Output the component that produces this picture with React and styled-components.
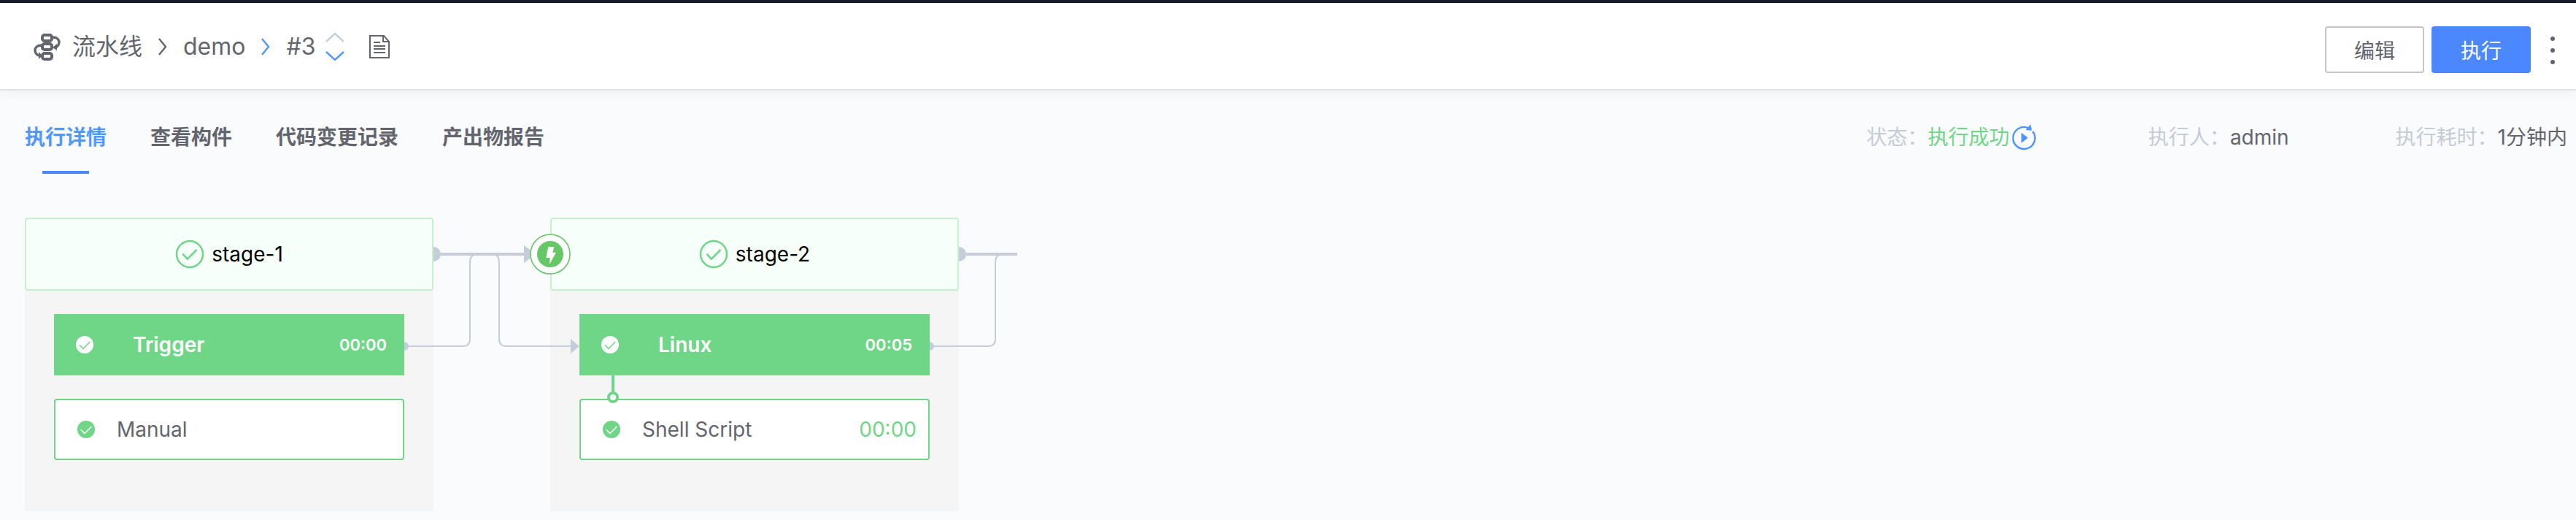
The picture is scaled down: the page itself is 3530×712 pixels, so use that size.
import React from "react";
import styled, { createGlobalStyle } from "styled-components";

const Global = createGlobalStyle`
  *, *::before, *::after { box-sizing: border-box; }
  body { margin: 0; background: #fafbfd; }
  body, button { font-family: Inter, "Noto Sans CJK SC", sans-serif; }
  svg { display: block; flex: none; }
`;

const Page = styled.div`
  min-height: 100vh;
  color: #63656e;
  font-size: 28px;
  line-height: 40px;
`;

const Header = styled.header`
  display: flex;
  justify-content: space-between;
  align-items: flex-start;
  padding: 32px 12px 22px 46px;
  background: #fff;
  border-top: 4px solid #181826;
  border-bottom: 2px solid #dde4eb;
  box-shadow: 0 4px 16px rgba(0, 0, 0, 0.04);
`;

const Breadcrumb = styled.nav`
  display: flex;
  align-items: center;
  height: 56px;
  font-size: 32px;
`;

const Crumb = styled.a`
  color: inherit;
  text-decoration: none;
`;

const BreadcrumbIcon = styled.svg`
  margin-right: 16px;
`;

const Separator = styled.svg`
  margin: 0 22px;
`;

const IconButton = styled.button`
  display: flex;
  flex-direction: column;
  gap: 12px;
  padding: 0;
  border: 0;
  background: none;
  color: inherit;
  margin-left: ${(p) => p.$gap}px;
`;

const Actions = styled.div`
  display: flex;
  align-items: center;
  gap: 10px;
`;

const Button = styled.button`
  width: 136px;
  height: 64px;
  padding: 0;
  border: 2px solid ${(p) => (p.$primary ? "#4b87ff" : "#c4c6cc")};
  border-radius: 4px;
  background: ${(p) => (p.$primary ? "#4b87ff" : "#fff")};
  color: ${(p) => (p.$primary ? "#fff" : "#63656e")};
  font-size: 28px;
`;

const SubBar = styled.div`
  display: flex;
  justify-content: space-between;
  align-items: flex-start;
  padding: 40px 12px 0 34px;
  line-height: 48px;
`;

const Tabs = styled.nav`
  display: flex;
  gap: 60px;
`;

const Tab = styled.a`
  color: ${(p) => (p.$active ? "#5098ff" : "#63656e")};
  font-weight: 700;
  text-decoration: none;
  &::after {
    content: "";
    display: block;
    width: 64px;
    height: 4px;
    margin: 22px auto 0;
    background: ${(p) => (p.$active ? "#4b87ff" : "transparent")};
  }
`;

const Summary = styled.dl`
  display: flex;
  gap: 146px;
  margin: 0;
`;

const Fact = styled.div`
  display: flex;
  align-items: center;
`;

const FactLabel = styled.dt`
  color: #c5ccd6;
`;

const FactValue = styled.dd`
  display: flex;
  align-items: center;
  margin: 0;
  color: ${(p) => (p.$success ? "#6fd687" : "#63656e")};
`;

const RetryButton = styled.button`
  margin: 0 8px 0 2px;
  padding: 0;
  border: 0;
  background: none;
`;

const Pipeline = styled.main`
  display: flex;
  align-items: flex-start;
  padding: 60px 34px 12px;
`;

const Stage = styled.section`
  position: relative;
  flex: none;
  width: 560px;
  border-radius: 4px;
  background: #f5f5f5;
`;

const StageHeader = styled.header`
  display: flex;
  align-items: center;
  justify-content: center;
  gap: 10px;
  height: 100px;
  border: 2px solid #c6f0cf;
  border-radius: 4px;
  background: #f6fff9;
`;

const StageTitle = styled.h2`
  margin: 0;
  color: #000;
  font-size: 28px;
  font-weight: 400;
`;

const Gate = styled.span`
  position: absolute;
  top: 22px;
  left: -28px;
  z-index: 2;
`;

const Jobs = styled.div`
  display: flex;
  flex-direction: column;
  gap: 32px;
  padding: 32px 40px 70px;
`;

const JobRow = styled.div`
  display: flex;
  align-items: center;
  gap: 54px;
  height: 84px;
  padding: 0 24px 0 30px;
  background: #6fd687;
  color: #fff;
  font-weight: 600;
`;

const AtomRow = styled.div`
  position: relative;
  display: flex;
  align-items: center;
  gap: 30px;
  height: 84px;
  padding: 0 16px 0 30px;
  border: 2px solid #6fd687;
  border-radius: 4px;
  background: #fff;
`;

const Name = styled.span`
  flex: 1;
`;

const JobTime = styled.time`
  font-size: 22px;
`;

const AtomTime = styled.time`
  color: #6fd687;
`;

const AtomLinkSvg = styled.svg`
  position: absolute;
  left: 36px;
  top: -34px;
`;

const Connector = styled.svg`
  width: ${(p) => p.$width}px;
  height: 200px;
  overflow: visible;
  z-index: 1;
`;

const PipelineIcon = () => (
  <BreadcrumbIcon width="37" height="38" viewBox="0 0 37 38" fill="none" stroke="#63656e" strokeWidth="4">
    <rect x="12" y="3" width="13" height="8" rx="3" />
    <rect x="12" y="15" width="13" height="8" rx="3" />
    <rect x="12" y="28" width="13" height="8" rx="3" />
    <path d="M26 6c6 0 9 3 9 7s-3 7-7 7M11 17c-6 0-9 3-9 7s3 7 7 7" strokeWidth="3.4" />
    <path d="M32 15v9l-6-4zM7 26v10l5-5z" fill="#63656e" stroke="none" />
  </BreadcrumbIcon>
);

const Chevron = ({ color }) => (
  <Separator width="12" height="24" viewBox="0 0 12 24" fill="none" stroke={color} strokeWidth="2.4">
    <path d="M1 1l9 11L1 23" />
  </Separator>
);

const Caret = ({ up, color }) => (
  <svg width="26" height="13" viewBox="0 0 26 13" fill="none" stroke={color} strokeWidth="2.4">
    <path d={up ? "M1 12L13 1l12 11" : "M1 1l12 11L25 1"} />
  </svg>
);

const DocIcon = () => (
  <svg width="28" height="32" viewBox="0 0 28 32" fill="none" stroke="#63656e" strokeWidth="2">
    <path d="M1 1h19l7 8v22H1z" />
    <path d="M19 1v8h8M6 10h9M6 15h16M6 19h16M6 24h16" />
  </svg>
);

const MoreIcon = () => (
  <svg width="40" height="40" viewBox="0 0 40 40" fill="#63656e">
    <circle cx="20" cy="5" r="3" />
    <circle cx="20" cy="21" r="3" />
    <circle cx="20" cy="37" r="3" />
  </svg>
);

const RetryIcon = () => (
  <svg width="34" height="36" viewBox="0 0 34 36" fill="none" stroke="#4b94ff" strokeWidth="2.4">
    <path d="M29.6 10A15 15 0 1 1 24 5.4" />
    <path d="M26.3 1.3L27.6 8.2l-7-.6z" fill="#4b94ff" stroke="#4b94ff" strokeWidth="1" />
    <path d="M14 11.7l9 7-9 7z" fill="#4b94ff" stroke="none" />
  </svg>
);

const StageCheck = () => (
  <svg width="40" height="40" viewBox="0 0 40 40" fill="none" stroke="#6fd687" strokeWidth="2.5">
    <circle cx="20" cy="20" r="18" />
    <path d="M10.5 19.7l6.3 7L29.5 14" />
  </svg>
);

const CheckDot = ({ fill, mark }) => (
  <svg width="24" height="24" viewBox="0 0 24 24">
    <circle cx="12" cy="12" r="12" fill={fill} />
    <path d="M4.7 12.2l5.3 5.2 9.3-9.5" fill="none" stroke={mark} strokeWidth="1.5" />
  </svg>
);

const GateIcon = () => (
  <svg width="56" height="56" viewBox="0 0 56 56">
    <circle cx="28" cy="28" r="27" fill="#fff" stroke="#65c765" strokeWidth="1.6" />
    <circle cx="28" cy="28" r="18" fill="#65c765" />
    <path d="M25.3 18h8l-2 7.7H36L27 42l.7-9h-5.4z" fill="#fff" />
  </svg>
);

const AtomLink = () => (
  <AtomLinkSvg width="16" height="38" viewBox="0 0 16 38" stroke="#6fd687" strokeWidth="4">
    <path d="M8 0v24" />
    <circle cx="8" cy="30" r="6" fill="#fff" />
  </AtomLinkSvg>
);

const wireColor = "#c4cdd9";

const Wires = ({ last }) => (
  <Connector $width={last ? 80 : 160} fill="none" stroke={wireColor} strokeWidth="2">
    <path d={last ? "M0 50H80" : "M0 50H126"} strokeWidth="4" />
    <path d="M0 40a10 10 0 0 1 0 20zM-40 170a6 6 0 0 1 0 12z" fill={wireColor} stroke="none" />
    <path d="M-40 176H40q10 0 10-10V62q0-10 6-11" />
    {!last && (
      <>
        <path d="M84 51q6 1 6 11v104q0 10 10 10h90" />
        <path d="M124 38l16 12-16 12zM188 166l12 10-12 10z" fill={wireColor} stroke="none" />
      </>
    )}
  </Connector>
);

const stages = [
  { title: "stage-1", job: "Trigger", time: "00:00", atom: "Manual" },
  { title: "stage-2", job: "Linux", time: "00:05", atom: "Shell Script", atomTime: "00:00", gate: true, linked: true },
];

const tabs = ["执行详情", "查看构件", "代码变更记录", "产出物报告"];

export default function App() {
  return (
    <Page>
      <Global />
      <Header>
        <Breadcrumb>
          <PipelineIcon />
          <Crumb href="#pipelines">流水线</Crumb>
          <Chevron color="#63656e" />
          <Crumb href="#demo">demo</Crumb>
          <Chevron color="#5098ff" />
          <span>#3</span>
          <IconButton type="button" $gap={13} aria-label="切换构建">
            <Caret up color="#c4cdd9" />
            <Caret color="#5098ff" />
          </IconButton>
          <IconButton type="button" $gap={34} aria-label="查看日志">
            <DocIcon />
          </IconButton>
        </Breadcrumb>
        <Actions>
          <Button type="button">编辑</Button>
          <Button type="button" $primary>执行</Button>
          <IconButton type="button" $gap={0} aria-label="更多">
            <MoreIcon />
          </IconButton>
        </Actions>
      </Header>
      <SubBar>
        <Tabs>
          {tabs.map((t, i) => (
            <Tab key={t} href={`#tab-${i}`} $active={i === 0}>{t}</Tab>
          ))}
        </Tabs>
        <Summary>
          <Fact>
            <FactLabel>状态：</FactLabel>
            <FactValue $success>
              执行成功
              <RetryButton type="button" aria-label="重试"><RetryIcon /></RetryButton>
            </FactValue>
          </Fact>
          <Fact>
            <FactLabel>执行人：</FactLabel>
            <FactValue>admin</FactValue>
          </Fact>
          <Fact>
            <FactLabel>执行耗时：</FactLabel>
            <FactValue>1分钟内</FactValue>
          </Fact>
        </Summary>
      </SubBar>
      <Pipeline>
        {stages.map((s, i) => (
          <React.Fragment key={s.title}>
            <Stage>
              <StageHeader>
                <StageCheck />
                <StageTitle>{s.title}</StageTitle>
              </StageHeader>
              <Jobs>
                <JobRow>
                  <CheckDot fill="#fff" mark="#6fd687" />
                  <Name>{s.job}</Name>
                  <JobTime>{s.time}</JobTime>
                </JobRow>
                <AtomRow>
                  {s.linked && <AtomLink />}
                  <CheckDot fill="#6fd687" mark="#fff" />
                  <Name>{s.atom}</Name>
                  {s.atomTime && <AtomTime>{s.atomTime}</AtomTime>}
                </AtomRow>
              </Jobs>
              {s.gate && <Gate><GateIcon /></Gate>}
            </Stage>
            <Wires last={i === stages.length - 1} />
          </React.Fragment>
        ))}
      </Pipeline>
    </Page>
  );
}
